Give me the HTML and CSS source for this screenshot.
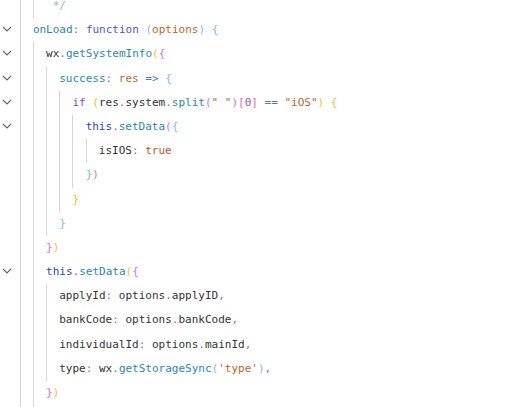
FILE: index.html
```html
<!DOCTYPE html>
<html>
<head>
<meta charset="utf-8">
<link rel="stylesheet" href="styles.css">
</head>
<body>
<div class="editor">
  <div class="line"><div class="gutter"></div><div class="code"><span class="g"></span><span class="g"></span><span class="x"><span class="c"> */</span></span></div></div>
  <div class="line"><div class="gutter"><svg class="chev" viewBox="0 0 10 6"><path d="M1 1L5 5L9 1"/></svg></div><div class="code"><span class="g"></span><span class="x"><span class="f">onLoad</span><span class="p">:</span> <span class="k">function</span> <span class="b3">(</span><span class="a">options</span><span class="b3">)</span> <span class="b3">{</span></span></div></div>
  <div class="line"><div class="gutter"><svg class="chev" viewBox="0 0 10 6"><path d="M1 1L5 5L9 1"/></svg></div><div class="code"><span class="g"></span><span class="g"></span><span class="x"><span class="i">wx</span><span class="p">.</span><span class="f">getSystemInfo</span><span class="b1">(</span><span class="b2">{</span></span></div></div>
  <div class="line"><div class="gutter"><svg class="chev" viewBox="0 0 10 6"><path d="M1 1L5 5L9 1"/></svg></div><div class="code"><span class="g"></span><span class="g"></span><span class="g"></span><span class="x"><span class="f">success</span><span class="p">:</span> <span class="a">res</span> <span class="o">=&gt;</span> <span class="b3">{</span></span></div></div>
  <div class="line"><div class="gutter"><svg class="chev" viewBox="0 0 10 6"><path d="M1 1L5 5L9 1"/></svg></div><div class="code"><span class="g"></span><span class="g"></span><span class="g"></span><span class="g"></span><span class="x"><span class="kw">if</span> <span class="b1">(</span><span class="i">res</span><span class="p">.</span><span class="i">system</span><span class="p">.</span><span class="f">split</span><span class="b2">(</span><span class="s">" "</span><span class="b2">)[</span><span class="n">0</span><span class="b2">]</span> <span class="o">==</span> <span class="s">"iOS"</span><span class="b1">)</span> <span class="b1">{</span></span></div></div>
  <div class="line"><div class="gutter"><svg class="chev" viewBox="0 0 10 6"><path d="M1 1L5 5L9 1"/></svg></div><div class="code"><span class="g"></span><span class="g"></span><span class="g"></span><span class="g"></span><span class="g"></span><span class="x"><span class="t">this</span><span class="p">.</span><span class="f">setData</span><span class="b2">(</span><span class="b3">{</span></span></div></div>
  <div class="line"><div class="gutter"></div><div class="code"><span class="g"></span><span class="g"></span><span class="g"></span><span class="g"></span><span class="g"></span><span class="g"></span><span class="x"><span class="i">isIOS</span><span class="p">:</span> <span class="v">true</span></span></div></div>
  <div class="line"><div class="gutter"></div><div class="code"><span class="g"></span><span class="g"></span><span class="g"></span><span class="g"></span><span class="g"></span><span class="x"><span class="b3">}</span><span class="b2">)</span></span></div></div>
  <div class="line"><div class="gutter"></div><div class="code"><span class="g"></span><span class="g"></span><span class="g"></span><span class="g"></span><span class="x"><span class="b1">}</span></span></div></div>
  <div class="line"><div class="gutter"></div><div class="code"><span class="g"></span><span class="g"></span><span class="g"></span><span class="x"><span class="b3">}</span></span></div></div>
  <div class="line"><div class="gutter"></div><div class="code"><span class="g"></span><span class="g"></span><span class="x"><span class="b2">}</span><span class="b1">)</span></span></div></div>
  <div class="line"><div class="gutter"><svg class="chev" viewBox="0 0 10 6"><path d="M1 1L5 5L9 1"/></svg></div><div class="code"><span class="g"></span><span class="g"></span><span class="x"><span class="t">this</span><span class="p">.</span><span class="f">setData</span><span class="b1">(</span><span class="b2">{</span></span></div></div>
  <div class="line"><div class="gutter"></div><div class="code"><span class="g"></span><span class="g"></span><span class="g"></span><span class="x"><span class="i">applyId</span><span class="p">:</span> <span class="i">options</span><span class="p">.</span><span class="i">applyID</span><span class="p">,</span></span></div></div>
  <div class="line"><div class="gutter"></div><div class="code"><span class="g"></span><span class="g"></span><span class="g"></span><span class="x"><span class="i">bankCode</span><span class="p">:</span> <span class="i">options</span><span class="p">.</span><span class="i">bankCode</span><span class="p">,</span></span></div></div>
  <div class="line"><div class="gutter"></div><div class="code"><span class="g"></span><span class="g"></span><span class="g"></span><span class="x"><span class="i">individualId</span><span class="p">:</span> <span class="i">options</span><span class="p">.</span><span class="i">mainId</span><span class="p">,</span></span></div></div>
  <div class="line"><div class="gutter"></div><div class="code"><span class="g"></span><span class="g"></span><span class="g"></span><span class="x"><span class="i">type</span><span class="p">:</span> <span class="i">wx</span><span class="p">.</span><span class="f">getStorageSync</span><span class="b3">(</span><span class="s">'type'</span><span class="b3">)</span><span class="p">,</span></span></div></div>
  <div class="line"><div class="gutter"></div><div class="code"><span class="g"></span><span class="g"></span><span class="x"><span class="b2">}</span><span class="b1">)</span></span></div></div>
  <div class="line"><div class="gutter"></div><div class="code"><span class="g"></span><span class="g"></span></div></div>
</div>
</body>
</html>
```

FILE: styles.css
```css
html, body {
  margin: 0;
  padding: 0;
  background: #ffffff;
  height: 407px;
  overflow: hidden;
}
.editor {
  margin-top: -6px;
  height: 413px;
  overflow: hidden;
  font-family: "DejaVu Sans Mono", "Liberation Mono", monospace;
  font-size: 11px;
  color: #333333;
}
.line {
  display: flex;
  height: 24.2px;
  line-height: 24.2px;
  white-space: pre;
}
.gutter {
  width: 19.7px;
  flex: none;
  position: relative;
}
.chev {
  position: absolute;
  left: 2px;
  top: 8px;
  width: 10px;
  height: 6px;
}
.chev path {
  fill: none;
  stroke: #5f6368;
  stroke-width: 1.1;
}
.code {
  display: flex;
  align-items: stretch;
  height: 100%;
}
.g {
  display: block;
  width: 13.2px;
  flex: none;
  box-sizing: border-box;
  border-left: 1px solid #d6d6d6;
  height: 100%;
}
.x {
  display: block;
  white-space: pre;
}
.c { color: #86c595; }
.f { color: #2c86b3; }
.p { color: #b555c4; }
.k { color: #5057c9; }
.kw { color: #a53bb6; }
.t { color: #2d3fcb; }
.a { color: #c0661e; }
.o { color: #4478dc; }
.s { color: #b8652a; }
.n { color: #8d5fb3; }
.v { color: #c05a20; }
.i { color: #333333; }
.b1 { color: #f0c02c; }
.b2 { color: #d96fd6; }
.b3 { color: #79bdf0; }
```
